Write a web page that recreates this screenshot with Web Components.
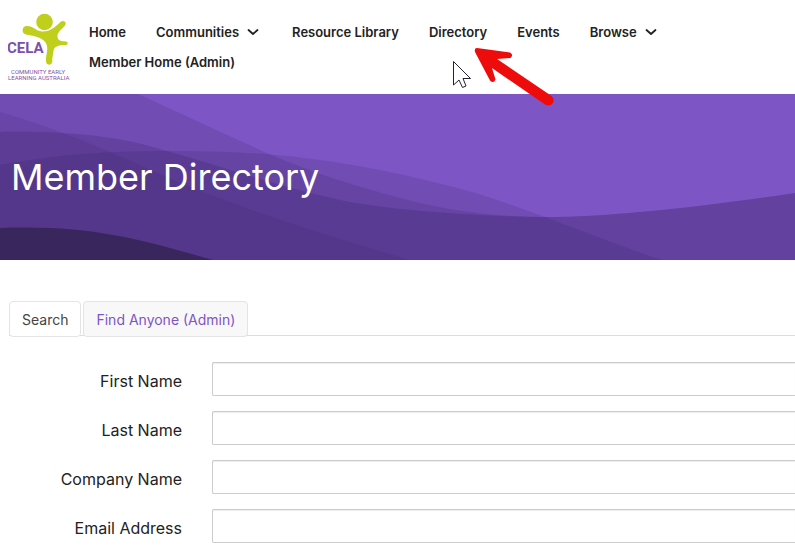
<!DOCTYPE html>
<html lang="en">
<head>
<meta charset="utf-8">
<meta name="viewport" content="width=device-width, initial-scale=1">
<title>Member Directory</title>
<style>
	body {
		margin: 0;
		background: white;
		color: #222;
		font-family: Inter, "Liberation Sans", sans-serif;
		font-size: 16px;
	}
</style>
</head>
<body>
	<site-header></site-header>
	<page-banner>Member Directory</page-banner>
	<directory-tabs></directory-tabs>
	<search-form>
		<form-row label="First Name" name="first"></form-row>
		<form-row label="Last Name" name="last"></form-row>
		<form-row label="Company Name" name="company"></form-row>
		<form-row label="Email Address" name="email"></form-row>
	</search-form>

<script>
class CelaLogo extends HTMLElement {
	constructor() {
		super();
		this.attachShadow({ mode: "open" });
		this.shadowRoot.innerHTML = /* HTML */ `
			<a href="#" aria-label="CELA home">
				<svg width="64" height="72" viewBox="8 12 64 72">
					<g fill="#bfcf1c">
						<circle cx="44.5" cy="22" r="8.3" />
						<circle cx="63" cy="23.5" r="2.6" />
						<path d="M27 26C33 26 36 31 42 31.500C50 32 55 27 61 21.500L65 25.500C60 31 57 33 57.500 37C58 41 61 41 66 41.500A1.700 1.700 0 0 1 66 45C59 45 54 46 53.500 51C53 55 52 58 52.300 62A3.200 3.200 0 0 1 46 62C45.500 56 48 51 47 46C46 39 37 36 26 34.500A4.300 4.300 0 0 1 27 26Z" />
					</g>
					<text x="7" y="53" font-size="15" font-weight="700">CELA</text>
					<text x="11" y="74" font-size="6">COMMUNITY EARLY</text>
					<text x="8" y="80" font-size="6">LEARNING AUSTRALIA</text>
				</svg>
			</a>

			<style>
				:host {
					display: block;
				}

				svg {
					display: block;
				}

				text {
					fill: #7d50ae;
					font-family: Roboto, sans-serif;
				}
			</style>
		`;
	}
}

class NavItem extends HTMLElement {
	constructor() {
		super();
		this.attachShadow({ mode: "open" });
		this.shadowRoot.innerHTML = /* HTML */ `
			<a href="#">
				<slot></slot>
				<svg width="12" height="8" viewBox="0 0 12 8">
					<path d="M1.500 2L6 6L10.500 2" fill="none" stroke="currentColor" stroke-width="1.800" stroke-linecap="round" stroke-linejoin="round" />
				</svg>
			</a>

			<style>
				:host {
					display: block;
				}

				:host([menu]) {
					padding-right: 3px;
				}

				a {
					display: flex;
					align-items: center;
					gap: 8px;
					color: #222;
					font-size: 13px;
					font-weight: 600;
					line-height: 30px;
					text-decoration: none;
					white-space: nowrap;
				}

				svg {
					display: none;
				}

				:host([menu]) svg {
					display: block;
				}
			</style>
		`;
	}
}

class SiteHeader extends HTMLElement {
	constructor() {
		super();
		this.attachShadow({ mode: "open" });
		this.shadowRoot.innerHTML = /* HTML */ `
			<header>
				<cela-logo></cela-logo>
				<nav>
					<nav-item>Home</nav-item>
					<nav-item menu>Communities</nav-item>
					<nav-item>Resource Library</nav-item>
					<nav-item>Directory</nav-item>
					<nav-item>Events</nav-item>
					<nav-item menu>Browse</nav-item>
					<nav-item>Member Home (Admin)</nav-item>
				</nav>
			</header>
			<!-- pointer and callout arrow lie over the header -->
			<svg class="pointer" width="20" height="30" viewBox="0 0 20 30">
				<path d="M1.500 1.500V25L7 20L10.500 27.500L14 26L11 18.500H18.500Z" fill="white" stroke="#223" />
			</svg>
			<svg class="arrow" width="84" height="64" viewBox="0 0 84 64">
				<path d="M5 4L38 8.500Q42 11 38.500 14L25 15L79.500 52A5 5 0 0 1 73 60.500L20 24L23.500 35.500Q21.500 40 18 36.500L3 8Q2 4 5 4Z" fill="#ed0b0b" />
			</svg>

			<style>
				:host {
					display: block;
					position: relative;
				}

				header {
					display: flex;
					gap: 17px;
					padding: 12px 8px 10px;
				}

				nav {
					display: flex;
					flex-wrap: wrap;
					align-content: flex-start;
					flex: 1;
					column-gap: 30px;
					max-width: 640px;
					padding-top: 5px;
				}

				.pointer,
				.arrow {
					position: absolute;
					z-index: 1;
					pointer-events: none;
				}

				.pointer {
					left: 452px;
					top: 60px;
				}

				.arrow {
					left: 472px;
					top: 44px;
				}
			</style>
		`;
	}
}

class PageBanner extends HTMLElement {
	constructor() {
		super();
		this.attachShadow({ mode: "open" });
		this.shadowRoot.innerHTML = /* HTML */ `
			<svg viewBox="0 0 795 166" preserveAspectRatio="none" aria-hidden="true">
				<path class="a" d="M0 0H138C180 19 220 38 267 59S360 93 400 104S490 123 548 123S695 114 795 99V166H0Z" />
				<path class="b" d="M0 18C63 36 115 60 167 83S300 134 410 166H0Z" />
				<path class="c" d="M0 38C95 36 140 49 167 57C233 76 300 99 350 108S490 123 548 123S695 114 795 99V166H0Z" />
				<path class="d" d="M0 71C60 60 110 57 167 57C280 56 365 69 472 98C540 119 590 142 662 166H0Z" />
				<path class="e" d="M0 134C90 131 135 144 213 166H0Z" />
			</svg>
			<h1><slot></slot></h1>

			<style>
				:host {
					display: grid;
					align-items: center;
					min-height: 166px;
					background: #7e55c5;
				}

				svg,
				h1 {
					grid-area: 1 / 1;
				}

				svg {
					width: 100%;
					height: 166px;
				}

				path {
					fill: #2b1a4e;
					fill-opacity: 0.15;
				}

				.b {
					fill-opacity: 0.12;
				}

				.c {
					fill-opacity: 0.2;
				}

				.e {
					fill: #38265c;
					fill-opacity: 1;
				}

				h1 {
					margin: 0;
					padding: 0 11px;
					color: white;
					font-size: 36px;
					font-weight: 400;
					z-index: 1;
				}
			</style>
		`;
	}
}

class DirectoryTabs extends HTMLElement {
	constructor() {
		super();
		this.attachShadow({ mode: "open" });
		this.shadowRoot.innerHTML = /* HTML */ `
			<div role="tablist">
				<button role="tab" aria-selected="true">Search</button>
				<button role="tab" aria-selected="false">Find Anyone (Admin)</button>
			</div>

			<style>
				:host {
					display: block;
					padding: 41px 0 0 9px;
				}

				div {
					display: flex;
					gap: 2px;
					height: 34px;
					border-bottom: 1px solid #ddd;
				}

				button {
					box-sizing: border-box;
					height: 36px;
					padding: 0 12px;
					border: 1px solid #e4e4e4;
					border-radius: 4px;
					background: #f8f8f8;
					color: #7e55c5;
					font: inherit;
					font-size: 14px;
				}

				button[aria-selected="true"] {
					background: white;
					color: #444;
				}
			</style>
		`;
	}
}

class SearchForm extends HTMLElement {
	constructor() {
		super();
		this.attachShadow({ mode: "open" });
		this.shadowRoot.innerHTML = /* HTML */ `
			<form><slot></slot></form>

			<style>
				:host {
					display: block;
					padding-top: 26px;
				}

				form {
					display: grid;
					gap: 15px;
				}
			</style>
		`;
	}
}

class FormRow extends HTMLElement {
	constructor() {
		super();
		this.attachShadow({ mode: "open" });
		this.shadowRoot.innerHTML = /* HTML */ `
			<label for="field"></label>
			<input id="field" type="text">

			<style>
				:host {
					display: grid;
					grid-template-columns: 182px 1fr;
					column-gap: 30px;
				}

				label {
					line-height: 38px;
					height: 34px;
					text-align: right;
				}

				input {
					box-sizing: border-box;
					width: 100%;
					height: 34px;
					padding: 6px 12px;
					border: 1px solid #ccc;
					/* fields bleed off the right edge of the page */
					border-right: 0;
					border-radius: 2px 0 0 2px;
					box-shadow: inset 0 1px 1px rgba(0, 0, 0, 0.075);
					font: inherit;
				}
			</style>
		`;
	}

	connectedCallback() {
		this.shadowRoot.querySelector("label").textContent = this.getAttribute("label");
		this.shadowRoot.querySelector("input").name = this.getAttribute("name");
	}
}

customElements.define("cela-logo", CelaLogo);
customElements.define("nav-item", NavItem);
customElements.define("site-header", SiteHeader);
customElements.define("page-banner", PageBanner);
customElements.define("directory-tabs", DirectoryTabs);
customElements.define("search-form", SearchForm);
customElements.define("form-row", FormRow);
</script>
</body>
</html>
